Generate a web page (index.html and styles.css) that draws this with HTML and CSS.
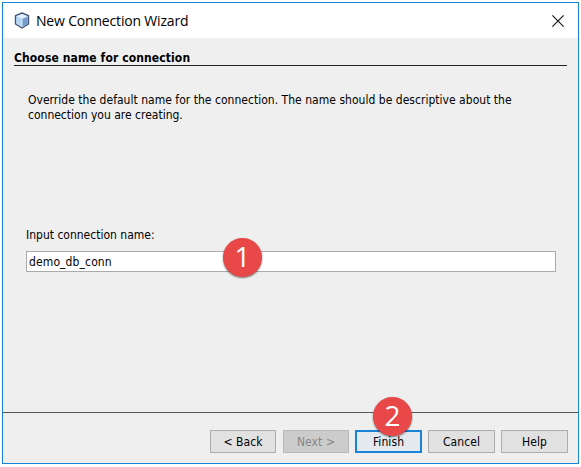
FILE: index.html
```html
<!DOCTYPE html>
<html lang="en">
<head>
<meta charset="utf-8">
<title>New Connection Wizard</title>
<link rel="stylesheet" href="styles.css">
</head>
<body>
<main class="window">
  <header class="titlebar">
    <svg class="logo" width="16" height="17" viewBox="0 0 16 17">
      <path d="M8 1 14.5 3.7V12L8 16 1.5 12V3.7Z" fill="#a9cbea" stroke="#465681" stroke-width="1.4" stroke-linejoin="round"/>
      <path d="M2.3 4.2 8 2l5.7 2.2L8 6.7Z" fill="#e4f0fa"/>
      <path d="M2.3 4.7 7.7 7v8L2.3 11.5Z" fill="#b8d8f2"/>
      <path d="M8.3 7l5.4-2.3v6.8L8.3 15Z" fill="#779ccc"/>
      <path d="M8 7v8" stroke="#dceefa" stroke-width=".8"/>
    </svg>
    <h1 class="title">New Connection Wizard</h1>
    <svg class="close" width="12" height="12" viewBox="0 0 12 12"><path d="M.4.4 11.6 11.6M11.6.4.4 11.6" stroke="#111" stroke-width="1.1"/></svg>
  </header>
  <section class="content">
    <h2 class="heading">Choose name for connection</h2>
    <p class="description"><span class="line-one">Override the default name for the connection. The name should be descriptive about the</span><br>connection you are creating.</p>
    <label class="label" for="name">Input connection name:</label>
    <div class="field">
      <input class="input" id="name" type="text" value="demo_db_conn">
      <span class="badge badge-one">1</span>
    </div>
  </section>
  <footer class="actions">
    <button class="button back">&lt; Back</button>
    <button class="button next" disabled>Next &gt;</button>
    <div class="step">
      <button class="button primary">Finish</button>
      <span class="badge badge-two">2</span>
    </div>
    <button class="button">Cancel</button>
    <button class="button">Help</button>
  </footer>
</main>
</body>
</html>
```
FILE: styles.css
```css
* { box-sizing: border-box; }
body {
  margin: 0;
  padding: 2px;
  background: #fff;
  color: #000;
  font: 12px/15px "DejaVu Sans Condensed", "DejaVu Sans", sans-serif;
  font-stretch: condensed;
}
.window {
  display: flex;
  flex-direction: column;
  width: 577px;
  height: 462px;
  border: 1px solid #1883d7;
  background: #efefef;
}
.titlebar {
  display: flex;
  align-items: center;
  height: 35px;
  padding: 0 14px 0 11px;
  background: #fff;
}
.title {
  margin: 0 auto 0 6px;
  font: 400 14px/20px "Open Sans", sans-serif;
  letter-spacing: -.18px;
}
.content { flex: 1; padding: 12px 11px 0; }
.heading {
  height: 16px;
  margin: 0;
  border-bottom: 1px solid #222;
  font-size: 12px;
  font-weight: 700;
  line-height: 17px;
  letter-spacing: .11px;
}
.description { margin: 27px 0 0 14px; white-space: nowrap; }
.line-one { letter-spacing: .025px; }
.label { display: block; margin: 105px 0 0 12px; }
.field { position: relative; margin: 8px 11px 0 12px; }
.input {
  display: block;
  width: 530px;
  height: 21px;
  padding: 1px 2px 0;
  border: 1px solid #ababab;
  background: #fff;
  color: #000;
  font: inherit;
  letter-spacing: .12px;
}
.actions {
  display: flex;
  justify-content: flex-end;
  gap: 6px;
  height: 51px;
  padding: 17px 10px 0 0;
  border-top: 1px solid #555;
}
.button {
  display: block;
  width: 67px;
  height: 23px;
  padding: 1px 0 0;
  border: 1px solid #adadad;
  border-radius: 0;
  background: #e1e1e1;
  color: #000;
  font: inherit;
  letter-spacing: .08px;
}
.back, .next { width: 66px; }
.back { margin-right: 1px; }
.button:disabled { border-color: #b9b9b9; background: #ccc; color: #858585; }
.primary { border: 2px solid #1883d7; background: #e3e9ef; }
.step { position: relative; }
.badge {
  position: absolute;
  width: 39px;
  height: 39px;
  border-radius: 50%;
  background: #e84848;
  box-shadow: 0 1px 2px #0008;
  color: #fff;
  font: 28px/37px "Open Sans", sans-serif;
  text-align: center;
}
.badge-one { left: 197px; top: -13px; }
.badge-two { left: 18px; top: -33px; }
```
